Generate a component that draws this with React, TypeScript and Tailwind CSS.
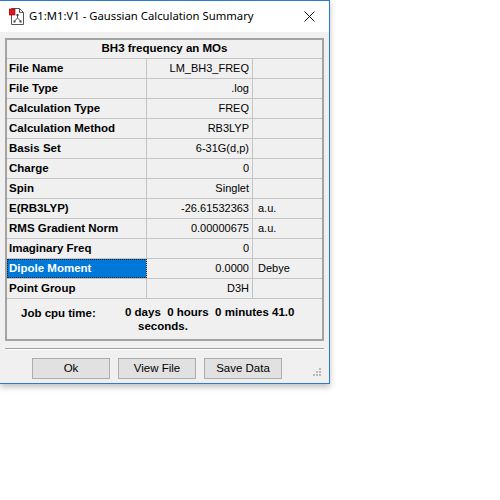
import React from 'react';

type Row = {
  label: string;
  value: string;
  unit?: string;
  selected?: boolean;
};

const rows: Row[] = [
  { label: 'File Name', value: 'LM_BH3_FREQ' },
  { label: 'File Type', value: '.log' },
  { label: 'Calculation Type', value: 'FREQ' },
  { label: 'Calculation Method', value: 'RB3LYP' },
  { label: 'Basis Set', value: '6-31G(d,p)' },
  { label: 'Charge', value: '0' },
  { label: 'Spin', value: 'Singlet' },
  { label: 'E(RB3LYP)', value: '-26.61532363', unit: 'a.u.' },
  { label: 'RMS Gradient Norm', value: '0.00000675', unit: 'a.u.' },
  { label: 'Imaginary Freq', value: '0' },
  { label: 'Dipole Moment', value: '0.0000', unit: 'Debye', selected: true },
  { label: 'Point Group', value: 'D3H' },
];

const sans = "font-['Liberation_Sans',Arial,sans-serif]";

const AppIcon = () => (
  <svg width="16" height="17" viewBox="0 0 16 17" className="shrink-0">
    {/* page with folded corner */}
    <path d="M2.5 0.5 H10.5 L14.5 4.5 V16.5 H2.5 Z" fill="#fff" stroke="#555" strokeWidth="1" />
    <path d="M10.5 0.5 V4.5 H14.5" fill="none" stroke="#555" strokeWidth="1" />
    {/* molecule tree */}
    <path d="M8.5 7 V10 M8.5 10 L5.5 13 M8.5 10 L11.5 13" stroke="#555" strokeWidth="1" fill="none" />
    <rect x="7.5" y="6" width="2" height="2" fill="#444" />
    <rect x="4.5" y="12.5" width="2" height="2" fill="#444" />
    <rect x="10.5" y="12.5" width="2" height="2" fill="#444" />
    {/* red marker */}
    <rect x="0" y="1" width="6" height="6" fill="#e8141b" stroke="#8a0b0e" strokeWidth="0.6" />
  </svg>
);

const WinButton = ({ children }: { children: React.ReactNode }) => (
  <button className="h-[21px] w-[78px] border border-[#adadad] bg-[#e1e1e1] text-[11.5px] text-black">
    {children}
  </button>
);

export default function App() {
  return (
    <div className={`h-[500px] w-[500px] bg-white ${sans}`}>
      <div className="flex h-[384px] w-[330px] flex-col border-t border-r border-b border-[#2b7bd4] shadow-[0_3px_6px_rgba(0,0,0,0.25)]">
        {/* title bar */}
        <div className="flex h-[31px] items-center bg-white pl-[9px] pr-[10px]">
          <AppIcon />
          <span className="ml-[4px] font-['Noto_Sans',sans-serif] text-[11.3px] text-black">
            G1:M1:V1 - Gaussian Calculation Summary
          </span>
          <span className="ml-auto mr-[3px] flex h-[14px] w-[14px] items-center justify-center">
            <svg width="11" height="11" viewBox="0 0 11 11">
              <path d="M0.5 0.5 L10.5 10.5 M10.5 0.5 L0.5 10.5" stroke="#111" strokeWidth="1" />
            </svg>
          </span>
        </div>

        {/* body */}
        <div className="relative flex flex-1 flex-col bg-[#f0f0f0] px-[5px] pt-[6px]">
          <div className="border-2 border-[#a3a3a3] bg-[#f0f0f0]">
            <div className="flex h-[19px] items-center justify-center border-b border-[#c4c4c4] text-[11.5px] font-bold text-black">
              BH3 frequency an MOs
            </div>
            {rows.map(row => (
              <div
                key={row.label}
                className="grid h-[20px] grid-cols-[140px_106px_1fr] border-b border-[#c4c4c4] text-black"
              >
                <div
                  className={`flex items-center border-r border-[#c4c4c4] pl-[2px] text-[11.5px] font-bold ${
                    row.selected ? 'bg-[#0078d7] text-white outline-1 -outline-offset-1 outline-dotted outline-[#222]' : ''
                  }`}
                >
                  {row.label}
                </div>
                <div className="flex items-center justify-end border-r border-[#c4c4c4] pr-[3px] text-[11px]">
                  {row.value}
                </div>
                <div className="flex items-center pl-[5px] text-[11px]">{row.unit}</div>
              </div>
            ))}
            <div className="flex h-[40px] pt-[6px] text-[11.5px] font-bold text-black">
              <div className="w-[118px] pl-[14px]">Job cpu time:</div>
              <div className="flex flex-col leading-[14px]">
                <span className="whitespace-pre">0 days  0 hours  0 minutes 41.0</span>
                <span className="pl-[13px]">seconds.</span>
              </div>
            </div>
          </div>

          {/* etched separator */}
          <div className="mt-[7px] border-t border-b border-t-[#a0a0a0] border-b-white" />

          <div className="mt-[8px] flex gap-[8px] pl-[27px]">
            <WinButton>Ok</WinButton>
            <WinButton>View File</WinButton>
            <WinButton>Save Data</WinButton>
          </div>

          {/* size grip */}
          <svg width="8" height="8" viewBox="0 0 8 8" className="absolute bottom-[7px] right-[8px]">
            <rect x="6" y="0" width="2" height="2" fill="#b8b8b8" />
            <rect x="3" y="3" width="2" height="2" fill="#b8b8b8" />
            <rect x="6" y="3" width="2" height="2" fill="#b8b8b8" />
            <rect x="0" y="6" width="2" height="2" fill="#b8b8b8" />
            <rect x="3" y="6" width="2" height="2" fill="#b8b8b8" />
            <rect x="6" y="6" width="2" height="2" fill="#b8b8b8" />
          </svg>
        </div>
      </div>
    </div>
  );
}
